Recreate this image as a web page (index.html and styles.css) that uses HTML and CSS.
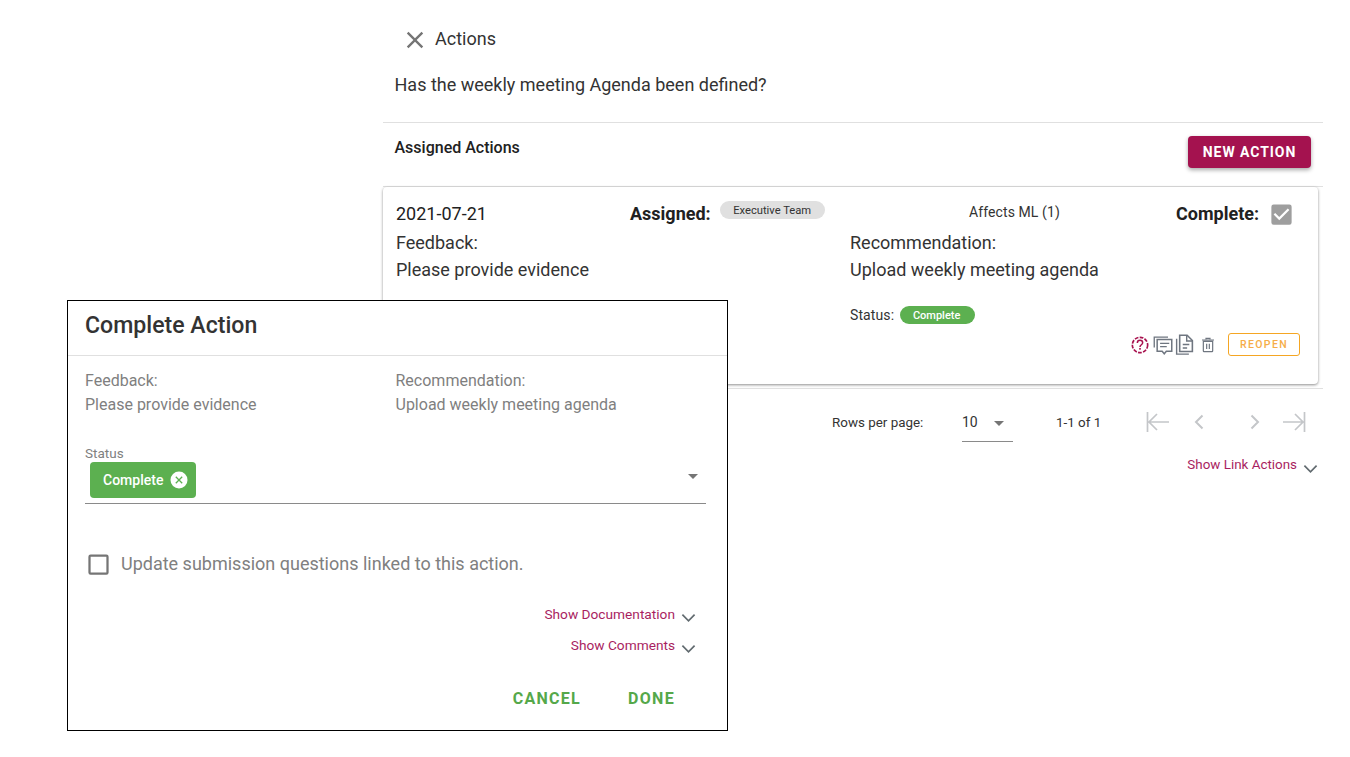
FILE: index.html
```html
<!DOCTYPE html>
<html lang="en">
<head>
<meta charset="utf-8">
<title>Actions</title>
<link rel="stylesheet" href="styles.css">
</head>
<body>
<main class="panel">
  <header class="panel-head">
    <svg class="close-icon" viewBox="0 0 24 24"><path d="M19 6.41 17.59 5 12 10.59 6.41 5 5 6.41 10.59 12 5 17.59 6.41 19 12 13.41 17.59 19 19 17.59 13.41 12z"/></svg>
    <span class="panel-title">Actions</span>
  </header>
  <p class="question">Has the weekly meeting Agenda been defined?</p>
  <section class="assigned">
    <div class="assigned-head">
      <h2 class="assigned-title">Assigned Actions</h2>
      <button class="new-action">NEW ACTION</button>
    </div>
    <article class="card">
      <div class="card-row-top">
        <span class="date">2021-07-21</span>
        <div class="assigned-cell"><strong class="big-label">Assigned:</strong><span class="chip-grey">Executive Team</span></div>
        <span class="affects">Affects ML (1)</span>
        <div class="complete-cell"><strong class="big-label">Complete:</strong>
          <svg class="check-icon" viewBox="0 0 24 24"><path d="M19 3H5a2 2 0 0 0-2 2v14a2 2 0 0 0 2 2h14a2 2 0 0 0 2-2V5a2 2 0 0 0-2-2zm-9 14-5-5 1.41-1.41L10 14.17l7.59-7.59L19 8l-9 9z"/></svg>
        </div>
      </div>
      <div class="card-cols">
        <div class="col">
          <div class="line">Feedback:</div>
          <div class="line">Please provide evidence</div>
        </div>
        <div class="col">
          <div class="line">Recommendation:</div>
          <div class="line">Upload weekly meeting agenda</div>
          <div class="status-row"><span class="status-label">Status:</span><span class="chip-green">Complete</span></div>
        </div>
      </div>
      <div class="card-actions">
        <svg class="ico ico-q" viewBox="0 0 24 24"><circle cx="12" cy="12" r="9.2" fill="none" stroke="#a8124f" stroke-width="2" stroke-dasharray="4.5 1.6"/><path d="M8.8 9.6c0-1.9 1.4-3.2 3.2-3.2s3.2 1.2 3.2 2.9c0 2.3-3.2 2.5-3.2 5" fill="none" stroke="#a8124f" stroke-width="1.8"/><rect x="11" y="15.6" width="2" height="2" fill="#a8124f"/></svg>
        <svg class="ico ico-c" viewBox="0 0 24 24"><path d="M1.5 15V2.5H18" fill="none" stroke="#6f7680" stroke-width="1.6"/><path d="M5 5.5h17.5v14H16l-2.5 3-2.5-3H5z" fill="none" stroke="#6f7680" stroke-width="1.8"/><path d="M8.500 10h11M8.500 14h8" stroke="#6f7680" stroke-width="1.6"/></svg>
        <svg class="ico ico-d" viewBox="0 0 24 24"><path d="M3 5.500V23h14" fill="none" stroke="#6f7680" stroke-width="1.6"/><path d="M6.500 1.500H15l6 6V20H6.500z" fill="none" stroke="#6f7680" stroke-width="1.800"/><path d="M14.500 1.500V8H21M10 12h7.500M10 16h5" fill="none" stroke="#6f7680" stroke-width="1.600"/></svg>
        <svg class="ico ico-t" viewBox="0 0 24 24"><path d="M5 6.500h14V21a1 1 0 0 1-1 1H6a1 1 0 0 1-1-1zM3 4.500h18M9 3.500V2h6v1.500M10 10v8M14 10v8" fill="none" stroke="#6f7680" stroke-width="1.800"/></svg>
        <button class="reopen">REOPEN</button>
      </div>
    </article>
  </section>
  <div class="pager">
    <span class="pager-label">Rows per page:</span>
    <div class="pager-select"><span>10</span><i class="caret"></i></div>
    <span class="pager-count">1-1 of 1</span>
    <div class="pager-nav">
      <svg class="nav nav-first" viewBox="0 0 24 24"><path d="M1.500 2v20M23 12H3M11 4l-8 8 8 8" fill="none" stroke="#c4c6c9" stroke-width="1.700"/></svg>
      <svg class="nav nav-prev" viewBox="0 0 24 24"><path d="M15.500 5.500 9 12l6.500 6.500" fill="none" stroke="#c4c6c9" stroke-width="2"/></svg>
      <svg class="nav nav-next" viewBox="0 0 24 24"><path d="M8.500 5.500 15 12l-6.500 6.500" fill="none" stroke="#c4c6c9" stroke-width="2"/></svg>
      <svg class="nav nav-last" viewBox="0 0 24 24"><path d="M22.500 2v20M1 12h20M13 4l8 8-8 8" fill="none" stroke="#c4c6c9" stroke-width="1.700"/></svg>
    </div>
  </div>
  <div class="show-link show-link-main"><span>Show Link Actions</span>
    <svg class="chev" viewBox="0 0 16 10"><path d="M1.500 1.500 8 8l6.500-6.500" fill="none" stroke="#616a6f" stroke-width="1.800"/></svg>
  </div>
</main>

<section class="dialog">
  <h1 class="dialog-title">Complete Action</h1>
  <div class="dialog-body">
    <div class="dialog-cols">
      <div class="dialog-col"><div>Feedback:</div><div>Please provide evidence</div></div>
      <div class="dialog-col"><div>Recommendation:</div><div>Upload weekly meeting agenda</div></div>
    </div>
    <div class="field">
      <label class="field-label">Status</label>
      <div class="field-input">
        <span class="chip-select">Complete
          <svg class="chip-x" viewBox="0 0 18 18"><circle cx="9" cy="9" r="8.500" fill="#fff"/><path d="M5.800 5.800l6.400 6.400M12.200 5.800l-6.400 6.400" stroke="#5cb050" stroke-width="1.300"/></svg>
        </span>
        <i class="caret caret-field"></i>
      </div>
    </div>
    <div class="update-row">
      <svg class="box" viewBox="0 0 24 24"><path d="M19 5v14H5V5h14m0-2H5a2 2 0 0 0-2 2v14a2 2 0 0 0 2 2h14a2 2 0 0 0 2-2V5a2 2 0 0 0-2-2z"/></svg>
      <span>Update submission questions linked to this action.</span>
    </div>
    <div class="show-link show-link-doc"><span>Show Documentation</span>
      <svg class="chev" viewBox="0 0 16 10"><path d="M1.500 1.500 8 8l6.500-6.500" fill="none" stroke="#616a6f" stroke-width="1.800"/></svg>
    </div>
    <div class="show-link show-link-com"><span>Show Comments</span>
      <svg class="chev" viewBox="0 0 16 10"><path d="M1.500 1.500 8 8l6.500-6.500" fill="none" stroke="#616a6f" stroke-width="1.800"/></svg>
    </div>
  </div>
  <div class="dialog-actions">
    <button class="text-btn">CANCEL</button>
    <button class="text-btn">DONE</button>
  </div>
</section>
</body>
</html>
```
FILE: styles.css
```css
* { box-sizing: border-box; }
html, body { margin: 0; padding: 0; }
body { font-family: Roboto, sans-serif; color: #212121; background: #fff; height: 757px; overflow: hidden; position: relative; }
button { font-family: inherit; cursor: pointer; }

.panel { margin-left: 383px; width: 940px; }
.panel-head { display: flex; align-items: center; height: 76px; padding: 0 0 0 18px; }
.close-icon { width: 28px; height: 28px; fill: #757575; margin-top: 4px; }
.panel-title { font-size: 18px; margin: 0 0 0 6px; color: #333; }
.question { margin: 0; padding: 2px 12px 0 11.500px; font-size: 18px; line-height: 14px; height: 46px; color: #333; }

.assigned { border-top: 1px solid #e0e0e0; border-bottom: 1px solid #e0e0e0; height: 267px; }
.assigned-head { display: flex; justify-content: space-between; height: 64px; padding: 13px 12px 0 11.500px; border-bottom: 1px solid #e0e0e0; }
.assigned-title { margin: 1px 0 0; font-size: 16px; font-weight: 500; line-height: 22px; color: #212121; }
.new-action { width: 123px; height: 32px; border: 0; border-radius: 4px; background: #a4124f; color: #fff; font-size: 14px; font-weight: 700; letter-spacing: .95px; box-shadow: 0 2px 4px rgba(0,0,0,.35); }

.card { width: 935px; height: 197px; border-radius: 4px; background: #fff; box-shadow: 0 1px 3px rgba(0,0,0,.45); padding: 0 13px; position: relative; display: flex; flex-direction: column; }
.card-row-top { display: flex; height: 42px; flex-shrink: 0; align-items: flex-start; padding-top: 13px; }
.date { font-size: 18px; width: 234px; line-height: 28px; }
.big-label { font-size: 18px; font-weight: 700; line-height: 28px; }
.assigned-cell { width: 339px; display: flex; align-items: flex-start; }
.chip-grey { display: inline-flex; align-items: center; justify-content: center; width: 105px; height: 18px; border-radius: 9px; background: #e0e0e0; color: #333; font-size: 11.200px; margin: 1px 0 0 9px; }
.affects { width: 207px; font-size: 14px; line-height: 24px; color: #333; letter-spacing: .1px; }
.complete-cell { display: flex; align-items: flex-start; }
.check-icon { width: 27px; height: 27px; fill: #9e9e9e; margin: 1px 0 0 9px; }

.card-cols { display: flex; }
.col { width: 454px; }
.line { font-size: 18px; line-height: 27px; color: #333; }
.status-row { display: flex; align-items: center; margin-top: 23px; height: 18px; }
.status-label { font-size: 14px; letter-spacing: .1px; color: #333; }
.chip-green { display: inline-flex; align-items: center; justify-content: center; width: 75px; height: 18px; padding-right: 2px; border-radius: 9px; background: #5cb050; color: #fff; font-size: 11px; font-weight: 500; margin-left: 6px; }

.card-actions { display: flex; align-items: center; justify-content: flex-end; padding-right: 5px; margin-top: 9px; }
.ico { display: block; }
.ico-q { width: 20px; height: 20px; }
.ico-c { width: 20px; height: 20px; margin-left: 3px; }
.ico-d { width: 21px; height: 21px; margin-left: 1px; }
.ico-t { width: 16px; height: 18px; margin-left: 5px; }
.reopen { width: 72px; height: 23px; margin-left: 12px; border: 1px solid #f5a623; border-radius: 3px; background: #fff; color: #f6ad48; font-size: 10.500px; font-weight: 500; letter-spacing: 1.350px; padding: 0; }

.pager { display: flex; align-items: center; height: 66px; padding-left: 449px; }
.pager-label { font-size: 13.400px; width: 130px; color: #333; }
.pager-select { width: 51px; height: 36px; border-bottom: 1px solid #8a8a8a; font-size: 14px; display: flex; align-items: center; justify-content: space-between; padding: 0 9px 3px 0; color: #333; margin-top: 4px; }
.caret { display: inline-block; width: 0; height: 0; border-left: 5px solid transparent; border-right: 5px solid transparent; border-top: 5px solid #757575; }
.pager-select .caret { margin-top: 2px; }
.pager-count { font-size: 13.400px; margin-left: 43px; width: 90px; color: #333; }
.pager-nav { display: flex; align-items: center; }
.nav { width: 24px; height: 24px; display: block; }
.nav-prev { margin-left: 17px; }
.nav-next { margin-left: 32px; }
.nav-last { margin-left: 15px; }

.show-link { display: flex; align-items: flex-start; justify-content: flex-end; line-height: 18px; color: #a91e5f; }
.chev { width: 15px; height: 10px; margin: 8px 0 0 6px; }
.show-link-main { font-size: 13.400px; padding-right: 5px; margin-top: 1px; }

.dialog { position: absolute; left: 67px; top: 300px; width: 661px; height: 431px; background: #fff; border: 1px solid #000; }
.dialog-title { margin: 0; height: 55px; border-bottom: 1px solid #e0e0e0; padding: 10px 17px 0; font-size: 23.100px; font-weight: 500; line-height: 30px; color: #333; }
.dialog-body { padding: 13px 21px 0 17px; }
.dialog-cols { display: flex; font-size: 16px; line-height: 24px; color: #7f7f7f; }
.dialog-col { width: 311px; }
.field { margin-top: 27px; }
.field-label { display: block; font-size: 13.500px; line-height: 18px; color: #808080; }
.field-input { height: 42px; border-bottom: 1px solid #8a8a8a; display: flex; align-items: flex-start; justify-content: space-between; padding: 0 8px 0 5px; }
.chip-select { display: inline-flex; align-items: center; height: 36px; width: 106px; padding-left: 13px; border-radius: 4px; background: #5cb050; color: #fff; font-size: 14px; font-weight: 500; }
.chip-x { width: 18px; height: 18px; margin-left: 7px; }
.caret-field { margin-top: 12px; }
.update-row { display: flex; align-items: center; margin-top: 46px; font-size: 18px; line-height: 28px; color: #808080; }
.box { width: 27px; height: 27px; fill: #757575; margin-right: 9px; }
.show-link-doc { font-size: 13.700px; margin-top: 27px; padding-right: 10px; }
.show-link-com { font-size: 13.700px; margin-top: 13px; padding-right: 10px; }
.dialog-actions { display: flex; justify-content: flex-end; gap: 31px; padding: 30px 44px 0 0; }
.text-btn { border: 0; background: none; padding: 0 8px; height: 28px; color: #55a84a; font-size: 16px; font-weight: 700; letter-spacing: 1.300px; }
```
